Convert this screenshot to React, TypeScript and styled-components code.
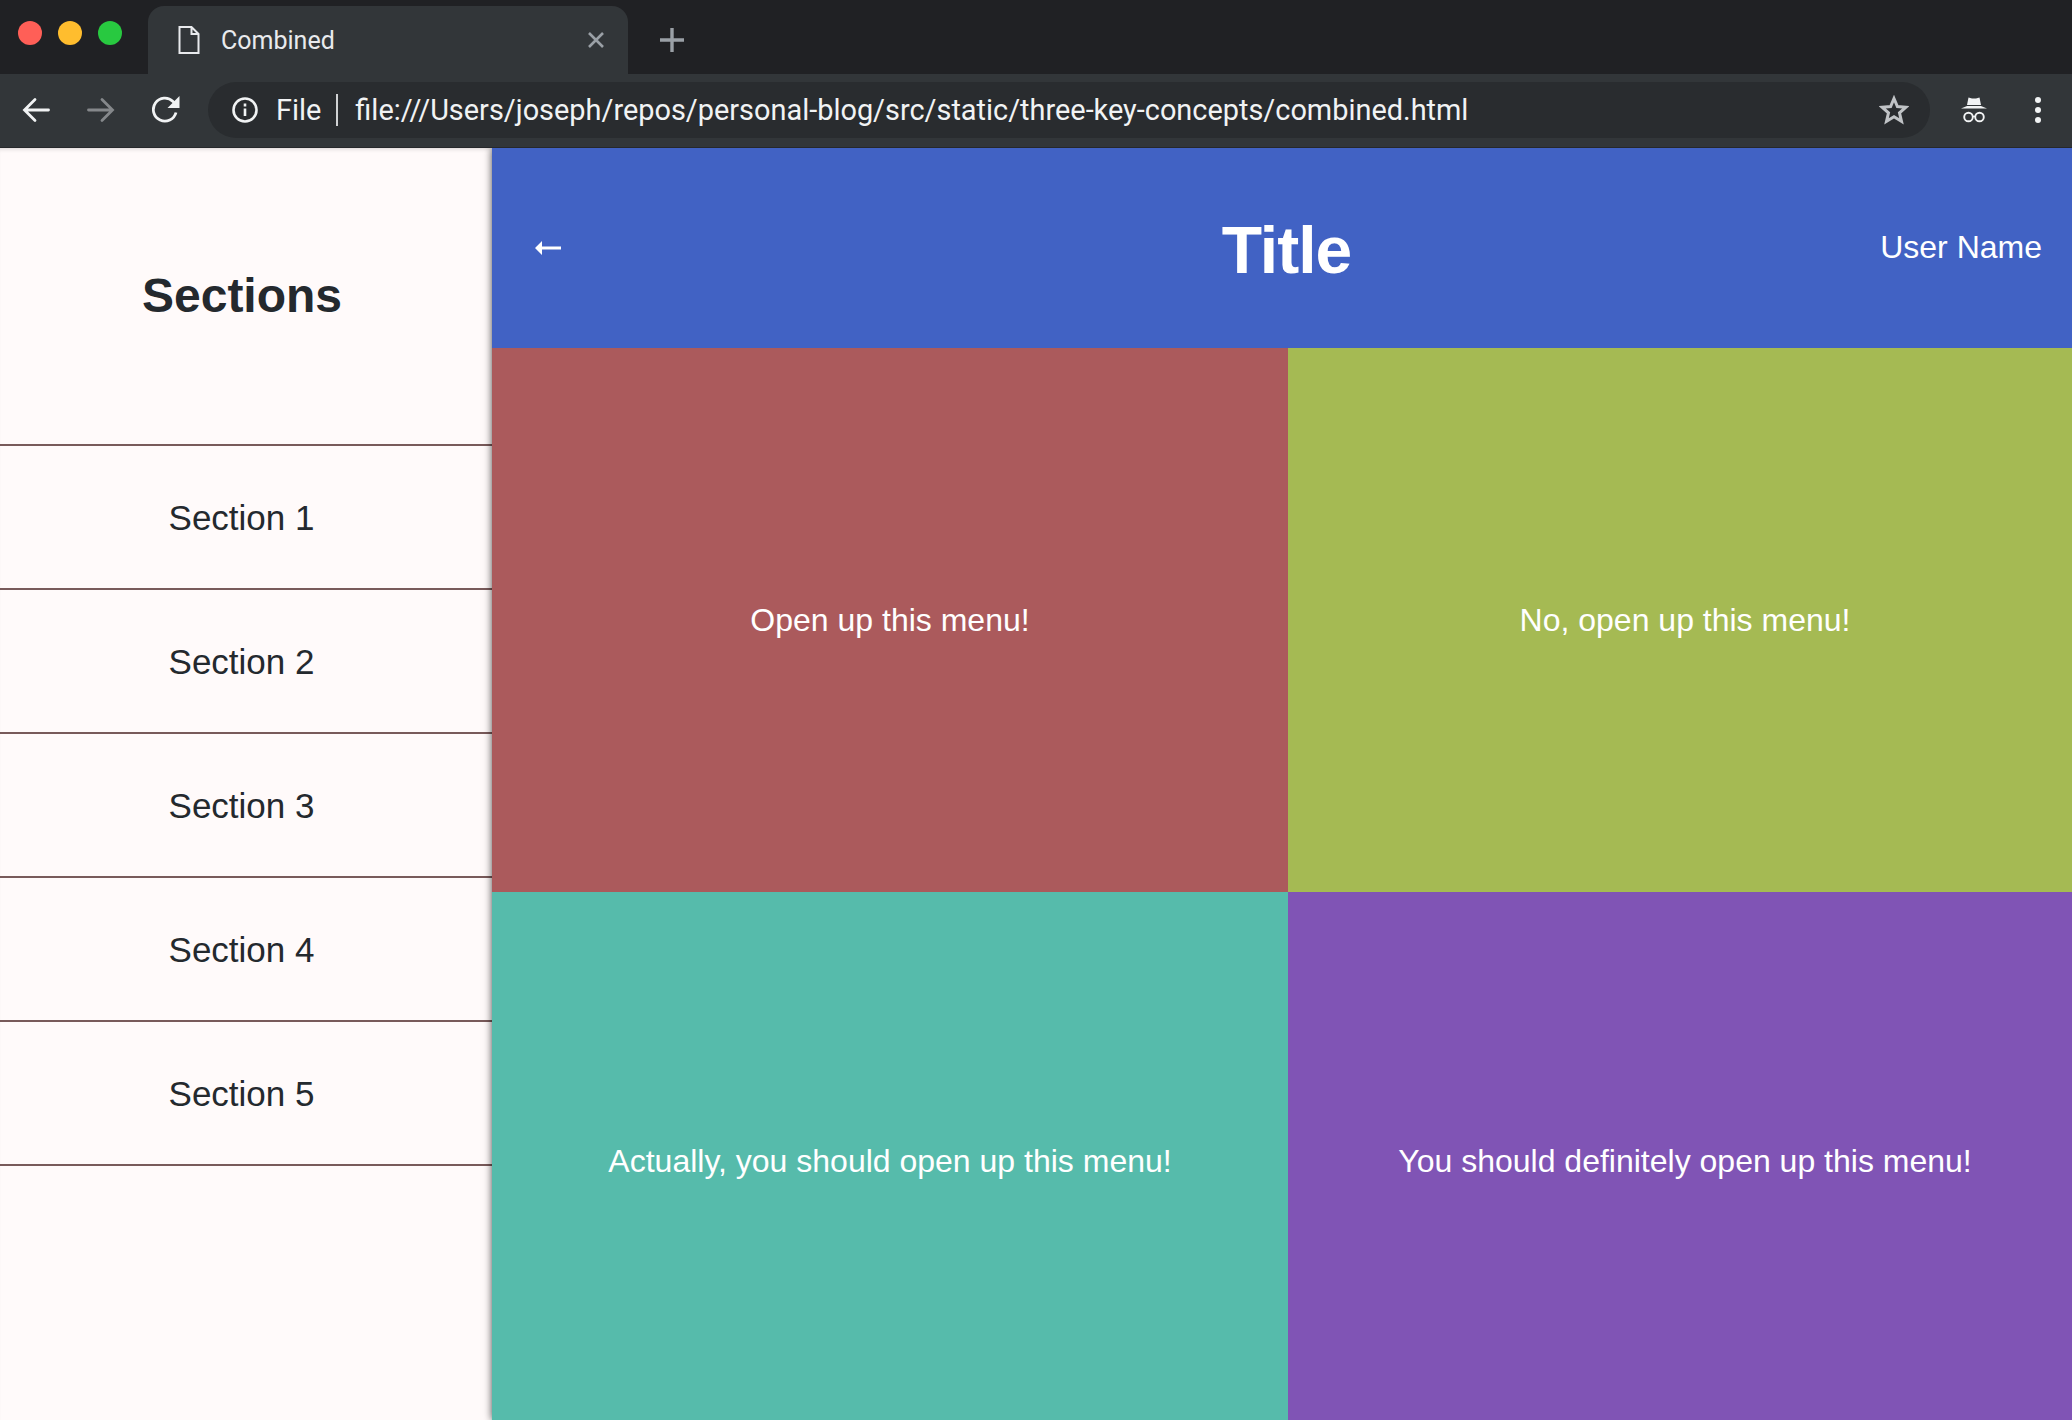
import React from 'react';
import styled, { createGlobalStyle } from 'styled-components';

const SECTIONS = ['Section 1', 'Section 2', 'Section 3', 'Section 4', 'Section 5'];

const MENUS = [
  { label: 'Open up this menu!', color: '#ab5a5c' },
  { label: 'No, open up this menu!', color: '#a5ba53' },
  { label: 'Actually, you should open up this menu!', color: '#56bbab' },
  { label: 'You should definitely open up this menu!', color: '#8054b5' },
];

const GlobalStyle = createGlobalStyle`
  html, body {
    margin: 0;
    height: 100%;
    overflow: hidden;
    background: #fffafa;
  }
`;

const Page = styled.div`
  width: 2072px;
  height: 1420px;
  display: flex;
  flex-direction: column;
  overflow: hidden;
`;

const TabStrip = styled.div`
  height: 74px;
  flex: none;
  background: #202124;
  display: flex;
  align-items: flex-end;
`;

const TrafficLights = styled.div`
  width: 148px;
  height: 74px;
  flex: none;
  padding: 21px 0 0 18px;
  box-sizing: border-box;
  display: flex;
  gap: 16px;
`;

const Light = styled.span<{ $color: string }>`
  width: 24px;
  height: 24px;
  border-radius: 50%;
  background: ${(p) => p.$color};
`;

const Tab = styled.div`
  width: 480px;
  height: 68px;
  box-sizing: border-box;
  padding: 0 24px 0 30px;
  background: #323639;
  border-radius: 16px 16px 0 0;
  display: flex;
  align-items: center;
  color: #e8eaed;
  font: 25px Roboto, sans-serif;
`;

const TabTitle = styled.span`
  margin-left: 21px;
  flex: 1;
`;

const NewTab = styled.div`
  margin-left: 32px;
  height: 68px;
  display: flex;
  align-items: center;
`;

const Toolbar = styled.div`
  height: 74px;
  flex: none;
  background: #323639;
  border-bottom: 1px solid #26282b;
  position: relative;
  z-index: 2;
  display: flex;
  align-items: center;
  box-sizing: border-box;
  padding: 0 31px 1px 22px;
`;

const NavButtons = styled.div`
  width: 186px;
  flex: none;
  display: flex;
  align-items: center;
  gap: 37px;
`;

const Omnibox = styled.div`
  width: 1722px;
  height: 56px;
  flex: none;
  box-sizing: border-box;
  padding: 0 21px 0 23px;
  border-radius: 28px;
  background: #292c2f;
  display: flex;
  align-items: center;
  color: #f1f3f4;
  font: 28.9px Roboto, sans-serif;
  white-space: nowrap;
`;

const Scheme = styled.span`
  margin-left: 17px;
  padding-right: 15px;
  line-height: 32px;
  border-right: 2px solid #d0d2d4;
`;

const Url = styled.span`
  margin-left: 17px;
  flex: 1;
`;

const ToolbarEnd = styled.div`
  flex: 1;
  display: flex;
  align-items: center;
  justify-content: space-between;
  padding-left: 30px;
`;

const Body = styled.div`
  flex: 1;
  min-height: 0;
  display: flex;
  font-family: 'Liberation Sans', Arial, sans-serif;
`;

const Sidebar = styled.nav`
  width: 492px;
  flex: none;
  background: #fffafa;
  box-shadow: inset 0 4px 4px -3px rgba(0, 0, 0, 0.16);
  color: #24292e;
`;

const SidebarHeading = styled.h2`
  height: 294px;
  margin: 0;
  padding: 0 8px 2px 0;
  display: flex;
  align-items: center;
  justify-content: center;
  font-size: 48px;
  font-weight: 700;
`;

const SectionItem = styled.div`
  height: 140px;
  padding: 2px 9px 0 0;
  border-top: 2px solid #785a5a;
  display: flex;
  align-items: center;
  justify-content: center;
  font-size: 35px;

  &:last-child {
    border-bottom: 2px solid #785a5a;
  }
`;

const Main = styled.main`
  flex: 1;
  min-width: 0;
  position: relative;
  box-shadow: 0 0 8px rgba(0, 0, 0, 0.7);
  color: #fff;
`;

const Header = styled.header`
  height: 200px;
  box-sizing: border-box;
  padding: 0 30px 0 43px;
  background: #4162c4;
  display: grid;
  grid-template-columns: 1fr auto 1fr;
  align-items: center;
`;

const BackLink = styled.div`
  display: flex;
  align-items: center;
`;

const Title = styled.h1`
  margin: 3px 4px 0 0;
  font-size: 66px;
  font-weight: 700;
  letter-spacing: -1px;
`;

const UserName = styled.div`
  justify-self: end;
  margin-bottom: 2px;
  font-size: 32px;
`;

const MenuGrid = styled.div`
  display: grid;
  grid-template-columns: 796px 794px;
  grid-template-rows: 544px 538px;
  width: 1580px;
  overflow: hidden;
`;

const MenuCard = styled.div<{ $color: string }>`
  display: flex;
  align-items: center;
  justify-content: center;
  background: ${(p) => p.$color};
  font-size: 32px;
`;

const HeaderArrow = () => (
  <svg width="26" height="14" viewBox="0 0 26 14" fill="#fff">
    <path d="M0 7 7 0v5.4h19v3.2H7V14z" />
  </svg>
);

const BackArrow = () => (
  <svg width="28" height="26" viewBox="0 0 28 26" fill="none" stroke="#f1f3f4" strokeWidth="2.8" strokeLinecap="round">
    <path d="M26.5 13H3M13 2.5 2.5 13 13 23.5" />
  </svg>
);

const ForwardArrow = () => (
  <svg width="28" height="26" viewBox="0 0 28 26" fill="none" stroke="#85888b" strokeWidth="2.8" strokeLinecap="round">
    <path d="M1.5 13H25M15 2.5 25.5 13 15 23.5" />
  </svg>
);

const ReloadIcon = () => (
  <svg width="28" height="28" viewBox="0 0 28 28" fill="none">
    <path d="M24 16.5A11.5 11.5 0 1 1 21 5.5l3 3" stroke="#f1f3f4" strokeWidth="2.8" />
    <path d="M27.5 0v12h-12z" fill="#f1f3f4" />
  </svg>
);

const InfoIcon = () => (
  <svg width="28" height="28" viewBox="0 0 28 28" fill="none" stroke="#f1f3f4" strokeWidth="2.6">
    <circle cx="14" cy="14" r="11.5" />
    <path d="M14 12.5V20M14 7.5v3" />
  </svg>
);

const FileIcon = () => (
  <svg width="22" height="28" viewBox="0 0 22 28" fill="none" stroke="#e8eaed" strokeWidth="2">
    <path d="M1.5 1h12l7 7v19h-19zM13.5 1v7h7" />
  </svg>
);

const CloseIcon = () => (
  <svg width="16" height="16" viewBox="0 0 16 16" stroke="#9aa0a6" strokeWidth="2.6">
    <path d="M1 1l14 14M15 1 1 15" />
  </svg>
);

const PlusIcon = () => (
  <svg width="24" height="24" viewBox="0 0 24 24" stroke="#9aa0a6" strokeWidth="3.4">
    <path d="M12 0v24M0 12h24" />
  </svg>
);

const StarIcon = () => (
  <svg width="30" height="30" viewBox="0 0 30 30" fill="none" stroke="#c0c3c6" strokeWidth="3">
    <path d="M15 3.5l3.4 8 8.6.7-6.5 5.7 2 8.4-7.5-4.5-7.5 4.5 2-8.4L3 12.2l8.6-.7z" />
  </svg>
);

const IncognitoIcon = () => (
  <svg width="28" height="28" viewBox="0 0 28 28" fill="none">
    <path d="M8.5 1.5 12 2.5h4l3.5-1 1.5 7.5H7z" fill="#f1f3f4" />
    <path d="M1 12.5 7 10h14l6 2.5z" fill="#f1f3f4" />
    <circle cx="8.5" cy="21" r="4.3" stroke="#f1f3f4" strokeWidth="1.9" />
    <circle cx="19.5" cy="21" r="4.3" stroke="#f1f3f4" strokeWidth="1.9" />
    <path d="M12.8 20.5h2.4" stroke="#f1f3f4" strokeWidth="1.5" />
  </svg>
);

const DotsIcon = () => (
  <svg width="6" height="28" viewBox="0 0 6 28" fill="#f1f3f4">
    <circle cx="3" cy="4" r="3" />
    <circle cx="3" cy="14" r="3" />
    <circle cx="3" cy="24" r="3" />
  </svg>
);

export default function App() {
  return (
    <Page>
      <GlobalStyle />
      <TabStrip>
        <TrafficLights>
          <Light $color="#ff5f57" />
          <Light $color="#ffbd2e" />
          <Light $color="#28c940" />
        </TrafficLights>
        <Tab>
          <FileIcon />
          <TabTitle>Combined</TabTitle>
          <CloseIcon />
        </Tab>
        <NewTab>
          <PlusIcon />
        </NewTab>
      </TabStrip>
      <Toolbar>
        <NavButtons>
          <BackArrow />
          <ForwardArrow />
          <ReloadIcon />
        </NavButtons>
        <Omnibox>
          <InfoIcon />
          <Scheme>File</Scheme>
          <Url>file:///Users/joseph/repos/personal-blog/src/static/three-key-concepts/combined.html</Url>
          <StarIcon />
        </Omnibox>
        <ToolbarEnd>
          <IncognitoIcon />
          <DotsIcon />
        </ToolbarEnd>
      </Toolbar>
      <Body>
        <Sidebar>
          <SidebarHeading>Sections</SidebarHeading>
          {SECTIONS.map((name) => (
            <SectionItem key={name}>{name}</SectionItem>
          ))}
        </Sidebar>
        <Main>
          <Header>
            <BackLink>
              <HeaderArrow />
            </BackLink>
            <Title>Title</Title>
            <UserName>User Name</UserName>
          </Header>
          <MenuGrid>
            {MENUS.map((menu) => (
              <MenuCard key={menu.label} $color={menu.color}>
                {menu.label}
              </MenuCard>
            ))}
          </MenuGrid>
        </Main>
      </Body>
    </Page>
  );
}
